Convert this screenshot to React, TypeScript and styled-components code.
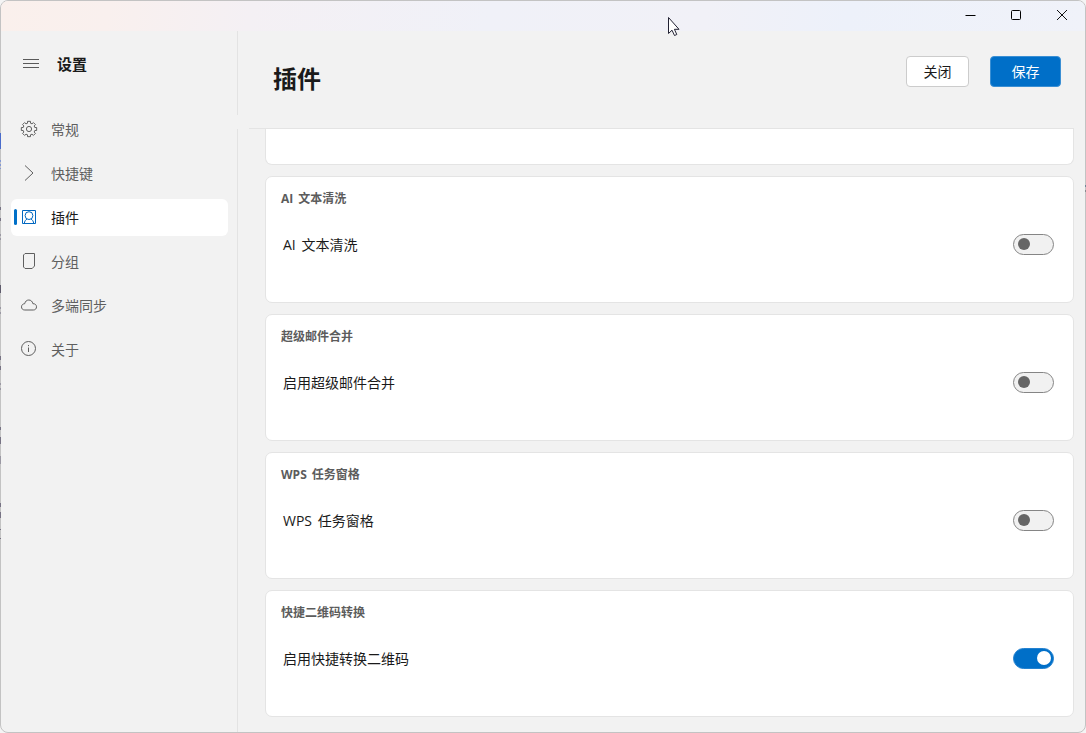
import React from 'react';
import styled, { createGlobalStyle, css } from 'styled-components';

const GlobalStyle = createGlobalStyle`
  * { box-sizing: border-box; }
  body {
    margin: 0;
    background: #f4f4f4;
    font-family: "Open Sans", "Noto Sans CJK SC", sans-serif;
    font-size: 14px;
    color: #1a1a1a;
    overflow: hidden;
  }
`;

const Desktop = styled.div`
  width: 1086px;
  height: 733px;
  background: #f4f4f4;
`;

const Window = styled.div`
  width: 100%;
  height: 100%;
  display: flex;
  flex-direction: column;
  border: 1px solid #c3c3c3;
  border-radius: 8px;
  background: #f2f2f2;
  overflow: hidden;
`;

/* Slivers of the windows behind that show through the frame edge. */
const EdgeShadow = styled.span<{ $top: number; $height: number; $color: string; $right?: boolean }>`
  position: absolute;
  ${({ $right }) => ($right ? 'left: 1085px;' : 'left: 0;')}
  top: ${({ $top }) => $top}px;
  width: 1px;
  height: ${({ $height }) => $height}px;
  background: ${({ $color }) => $color};
`;

const TitleBar = styled.div`
  height: 30px;
  flex: none;
  display: flex;
  justify-content: flex-end;
  background: linear-gradient(100deg, #faf0ec 0%, #f9f0ee 10%, #f4f0f4 23%, #f0f1f8 45%, #f1f1f7 65%, #edf1fa 78%, #f0f2f9 100%);
`;

const CaptionButton = styled.button`
  width: 46px;
  height: 28px;
  padding: 0;
  border: 0;
  background: none;
  display: flex;
  align-items: center;
  justify-content: center;
`;

const Body = styled.div`
  flex: 1;
  min-height: 0;
  display: flex;
`;

const Sidebar = styled.aside`
  width: 237px;
  flex: none;
  padding: 0 10px;
  background: linear-gradient(#e3e3e3 84px, transparent 84px, transparent 98px, #e3e3e3 98px) right / 1px 100% no-repeat;
`;

const SidebarHeader = styled.div`
  height: 66px;
  padding-left: 12px;
  display: flex;
  align-items: center;
  gap: 18px;
  svg { margin-bottom: 2px; }
`;

const SidebarTitle = styled.span`
  font-size: 15px;
  font-weight: 700;
  line-height: 20px;
`;

const Nav = styled.nav`
  padding-top: 14px;
  display: flex;
  flex-direction: column;
  gap: 7px;
`;

const NavItem = styled.a<{ $active?: boolean }>`
  width: 217px;
  height: 37px;
  padding: 0 0 2px 3px;
  display: flex;
  align-items: center;
  border-radius: 6px;
  color: #5f5f5f;
  ${({ $active }) => $active && css`
    background: #fff;
    color: #1a1a1a;
  `}
  svg { margin: 0 13px 0 3px; flex: none; color: ${({ $active }) => ($active ? '#0067c0' : '#5f5f5f')}; }
`;

const Indicator = styled.span<{ $on?: boolean }>`
  width: 3px;
  height: 16px;
  margin-top: 1px;
  border-radius: 2px;
  background: ${({ $on }) => ($on ? '#0070c8' : 'transparent')};
`;

const Main = styled.main`
  flex: 1;
  min-width: 0;
  display: flex;
  flex-direction: column;
`;

const Header = styled.header`
  height: 97px;
  flex: none;
  padding: 25px 24px 0 35px;
  display: flex;
`;

const PageTitle = styled.h1`
  margin: 5px auto 0 0;
  font-size: 24px;
  line-height: 36px;
  font-weight: 700;
`;

const Button = styled.button<{ $primary?: boolean }>`
  width: ${({ $primary }) => ($primary ? 71 : 63)}px;
  height: 31px;
  padding: 0 0 2px;
  font: inherit;
  border-radius: 4px;
  border: 1px solid ${({ $primary }) => ($primary ? '#3a8fd4' : '#cccccc')};
  background: ${({ $primary }) => ($primary ? '#006fc8' : '#fff')};
  color: ${({ $primary }) => ($primary ? '#fff' : '#1a1a1a')};
  & + & { margin-left: 21px; }
`;

const List = styled.div`
  flex: 1;
  min-height: 0;
  margin: 0 11px 0 11px;
  padding-left: 16px;
  border-top: 1px solid #e4e4e4;
  overflow: hidden;
`;

const Card = styled.section<{ $clipped?: boolean }>`
  height: 127px;
  margin-bottom: 11px;
  padding: 13px 19px 0 15px;
  background: #fff;
  border: 1px solid #e4e4e4;
  border-radius: 7px;
  word-spacing: 2px;
  ${({ $clipped }) => $clipped && css`
    height: 36px;
    border-top: 0;
    border-radius: 0 0 7px 7px;
  `}
`;

const CardTitle = styled.h2`
  margin: 0;
  font-size: 12px;
  line-height: 18px;
  font-weight: 700;
  color: #5c5c5c;
`;

const Row = styled.div`
  height: 22px;
  margin-top: 25px;
  padding-left: 2px;
  display: flex;
  align-items: center;
  justify-content: space-between;
`;

const Toggle = styled.span<{ $on?: boolean }>`
  width: 41px;
  height: 21px;
  padding: 0 ${({ $on }) => ($on ? 2 : 4)}px;
  display: flex;
  align-items: center;
  justify-content: ${({ $on }) => ($on ? 'flex-end' : 'flex-start')};
  border-radius: 11px;
  border: 1px solid ${({ $on }) => ($on ? '#2482d0' : '#858585')};
  background: ${({ $on }) => ($on ? '#006fc8' : '#f1f1f1')};
  &::after {
    content: '';
    width: ${({ $on }) => ($on ? 14 : 12)}px;
    height: ${({ $on }) => ($on ? 14 : 12)}px;
    border-radius: 50%;
    background: ${({ $on }) => ($on ? '#fff' : '#666')};
  }
`;

const Pointer = styled.svg`
  position: absolute;
  left: 667px;
  top: 16px;
`;

const Glyph = ({ children }: { children: React.ReactNode }) => (
  <svg width="18" height="18" viewBox="0 0 18 18" fill="none" stroke="currentColor" strokeWidth="1" strokeLinejoin="round">
    {children}
  </svg>
);

const gearPath = (() => {
  const points: string[] = [];
  for (let i = 0; i < 8; i++) {
    const a = (i * Math.PI) / 4 - Math.PI / 2;
    [[-0.25, 6], [-0.19, 7.8], [0.19, 7.8], [0.25, 6]].forEach(([d, r]) => {
      points.push(`${(9 + r * Math.cos(a + d)).toFixed(2)} ${(9 + r * Math.sin(a + d)).toFixed(2)}`);
    });
  }
  return `M${points.join('L')}Z`;
})();

const navItems = [
  { label: '常规', icon: <><path d={gearPath} /><circle cx="9" cy="9" r="2.6" /></> },
  { label: '快捷键', icon: <path d="M5 1.500 13 9l-8 7.500" /> },
  { label: '插件', active: true, icon: <><path d="M2.500 2.500h13v13h-13z" /><circle cx="9" cy="7.600" r="3.900" /><path d="M4.300 15.500c.2-2.100 1.200-3.700 2.700-4.500M13.700 15.500c-.2-2.100-1.200-3.700-2.700-4.500" /></> },
  { label: '分组', icon: <path d="M5 1.500h9.500v12.500l-2.300 2.500h-7.200l-1.500-1.500v-12z" /> },
  { label: '多端同步', icon: <path d="M4.800 14C2.700 14 1.500 12.700 1.500 10.900S2.800 7.800 4.700 7.700C5.200 5.400 6.700 4 8.800 4S12.400 5.400 12.900 7.700C15.100 7.600 16.500 8.900 16.500 10.800S15.300 14 13.300 14Z" /> },
  { label: '关于', icon: <><circle cx="8.500" cy="8.500" r="7" /><path d="M8.500 7.500v4.500M8.500 5v1.200" /></> },
];

const plugins = [
  { title: 'AI 文本清洗', label: 'AI 文本清洗' },
  { title: '超级邮件合并', label: '启用超级邮件合并' },
  { title: 'WPS 任务窗格', label: 'WPS 任务窗格' },
  { title: '快捷二维码转换', label: '启用快捷转换二维码', on: true },
];

const edgeMarks = [
  [133, 16, '#4a6ccb'], [160, 2, '#8499d4'], [164, 2, '#8499d4'], [168, 1, '#8499d4'],
  [207, 3, '#777384'], [218, 3, '#777384'], [234, 2, '#9a98a3'], [238, 2, '#9a98a3'],
  [285, 8, '#5e5b6c'], [307, 2, '#9a98a3'], [312, 2, '#9a98a3'],
  [356, 4, '#777384'], [366, 4, '#777384'], [383, 2, '#9a98a3'], [388, 2, '#9a98a3'],
  [427, 3, '#777384'], [437, 7, '#777384'], [456, 8, '#9a98a3'],
  [503, 4, '#777384'], [512, 6, '#777384'], [529, 1, '#777384'], [538, 1, '#777384'],
] as const;

export default function App() {
  return (
    <Desktop>
      <GlobalStyle />
      <Window>
        <TitleBar>
          <CaptionButton aria-label="最小化">
            <svg width="12" height="12" stroke="#000"><path d="M1.500 6.500h10" /></svg>
          </CaptionButton>
          <CaptionButton aria-label="最大化">
            <svg width="12" height="12" fill="none" stroke="#000"><rect x="1.500" y="1.500" width="9" height="9" rx="1" /></svg>
          </CaptionButton>
          <CaptionButton aria-label="关闭窗口">
            <svg width="12" height="12" stroke="#111"><path d="m1 1 10 10M11 1 1 11" /></svg>
          </CaptionButton>
        </TitleBar>
        <Body>
          <Sidebar>
            <SidebarHeader>
              <svg width="16" height="11" stroke="#5a5a5a"><path d="M0 1.500h16M0 5.500h16M0 9.500h16" /></svg>
              <SidebarTitle>设置</SidebarTitle>
            </SidebarHeader>
            <Nav>
              {navItems.map(({ label, icon, active }) => (
                <NavItem key={label} $active={active}>
                  <Indicator $on={active} />
                  <Glyph>{icon}</Glyph>
                  {label}
                </NavItem>
              ))}
            </Nav>
          </Sidebar>
          <Main>
            <Header>
              <PageTitle>插件</PageTitle>
              <Button>关闭</Button>
              <Button $primary>保存</Button>
            </Header>
            <List>
              <Card $clipped />
              {plugins.map(({ title, label, on }) => (
                <Card key={title}>
                  <CardTitle>{title}</CardTitle>
                  <Row>
                    {label}
                    <Toggle $on={on} />
                  </Row>
                </Card>
              ))}
            </List>
          </Main>
        </Body>
      </Window>
      {edgeMarks.map(([top, height, color]) => (
        <EdgeShadow key={top} $top={top} $height={height} $color={color} />
      ))}
      <EdgeShadow $right $top={185} $height={2} $color="#6f8598" />
      <EdgeShadow $right $top={190} $height={2} $color="#8a8a90" />
      <Pointer width="14" height="22" fill="#fff" stroke="#222233" strokeWidth="1">
        <path d="M1.500 1.500v16l3.500-3.300 2.500 5.300 2.300-1-2.400-5.200h4.600z" />
      </Pointer>
    </Desktop>
  );
}
